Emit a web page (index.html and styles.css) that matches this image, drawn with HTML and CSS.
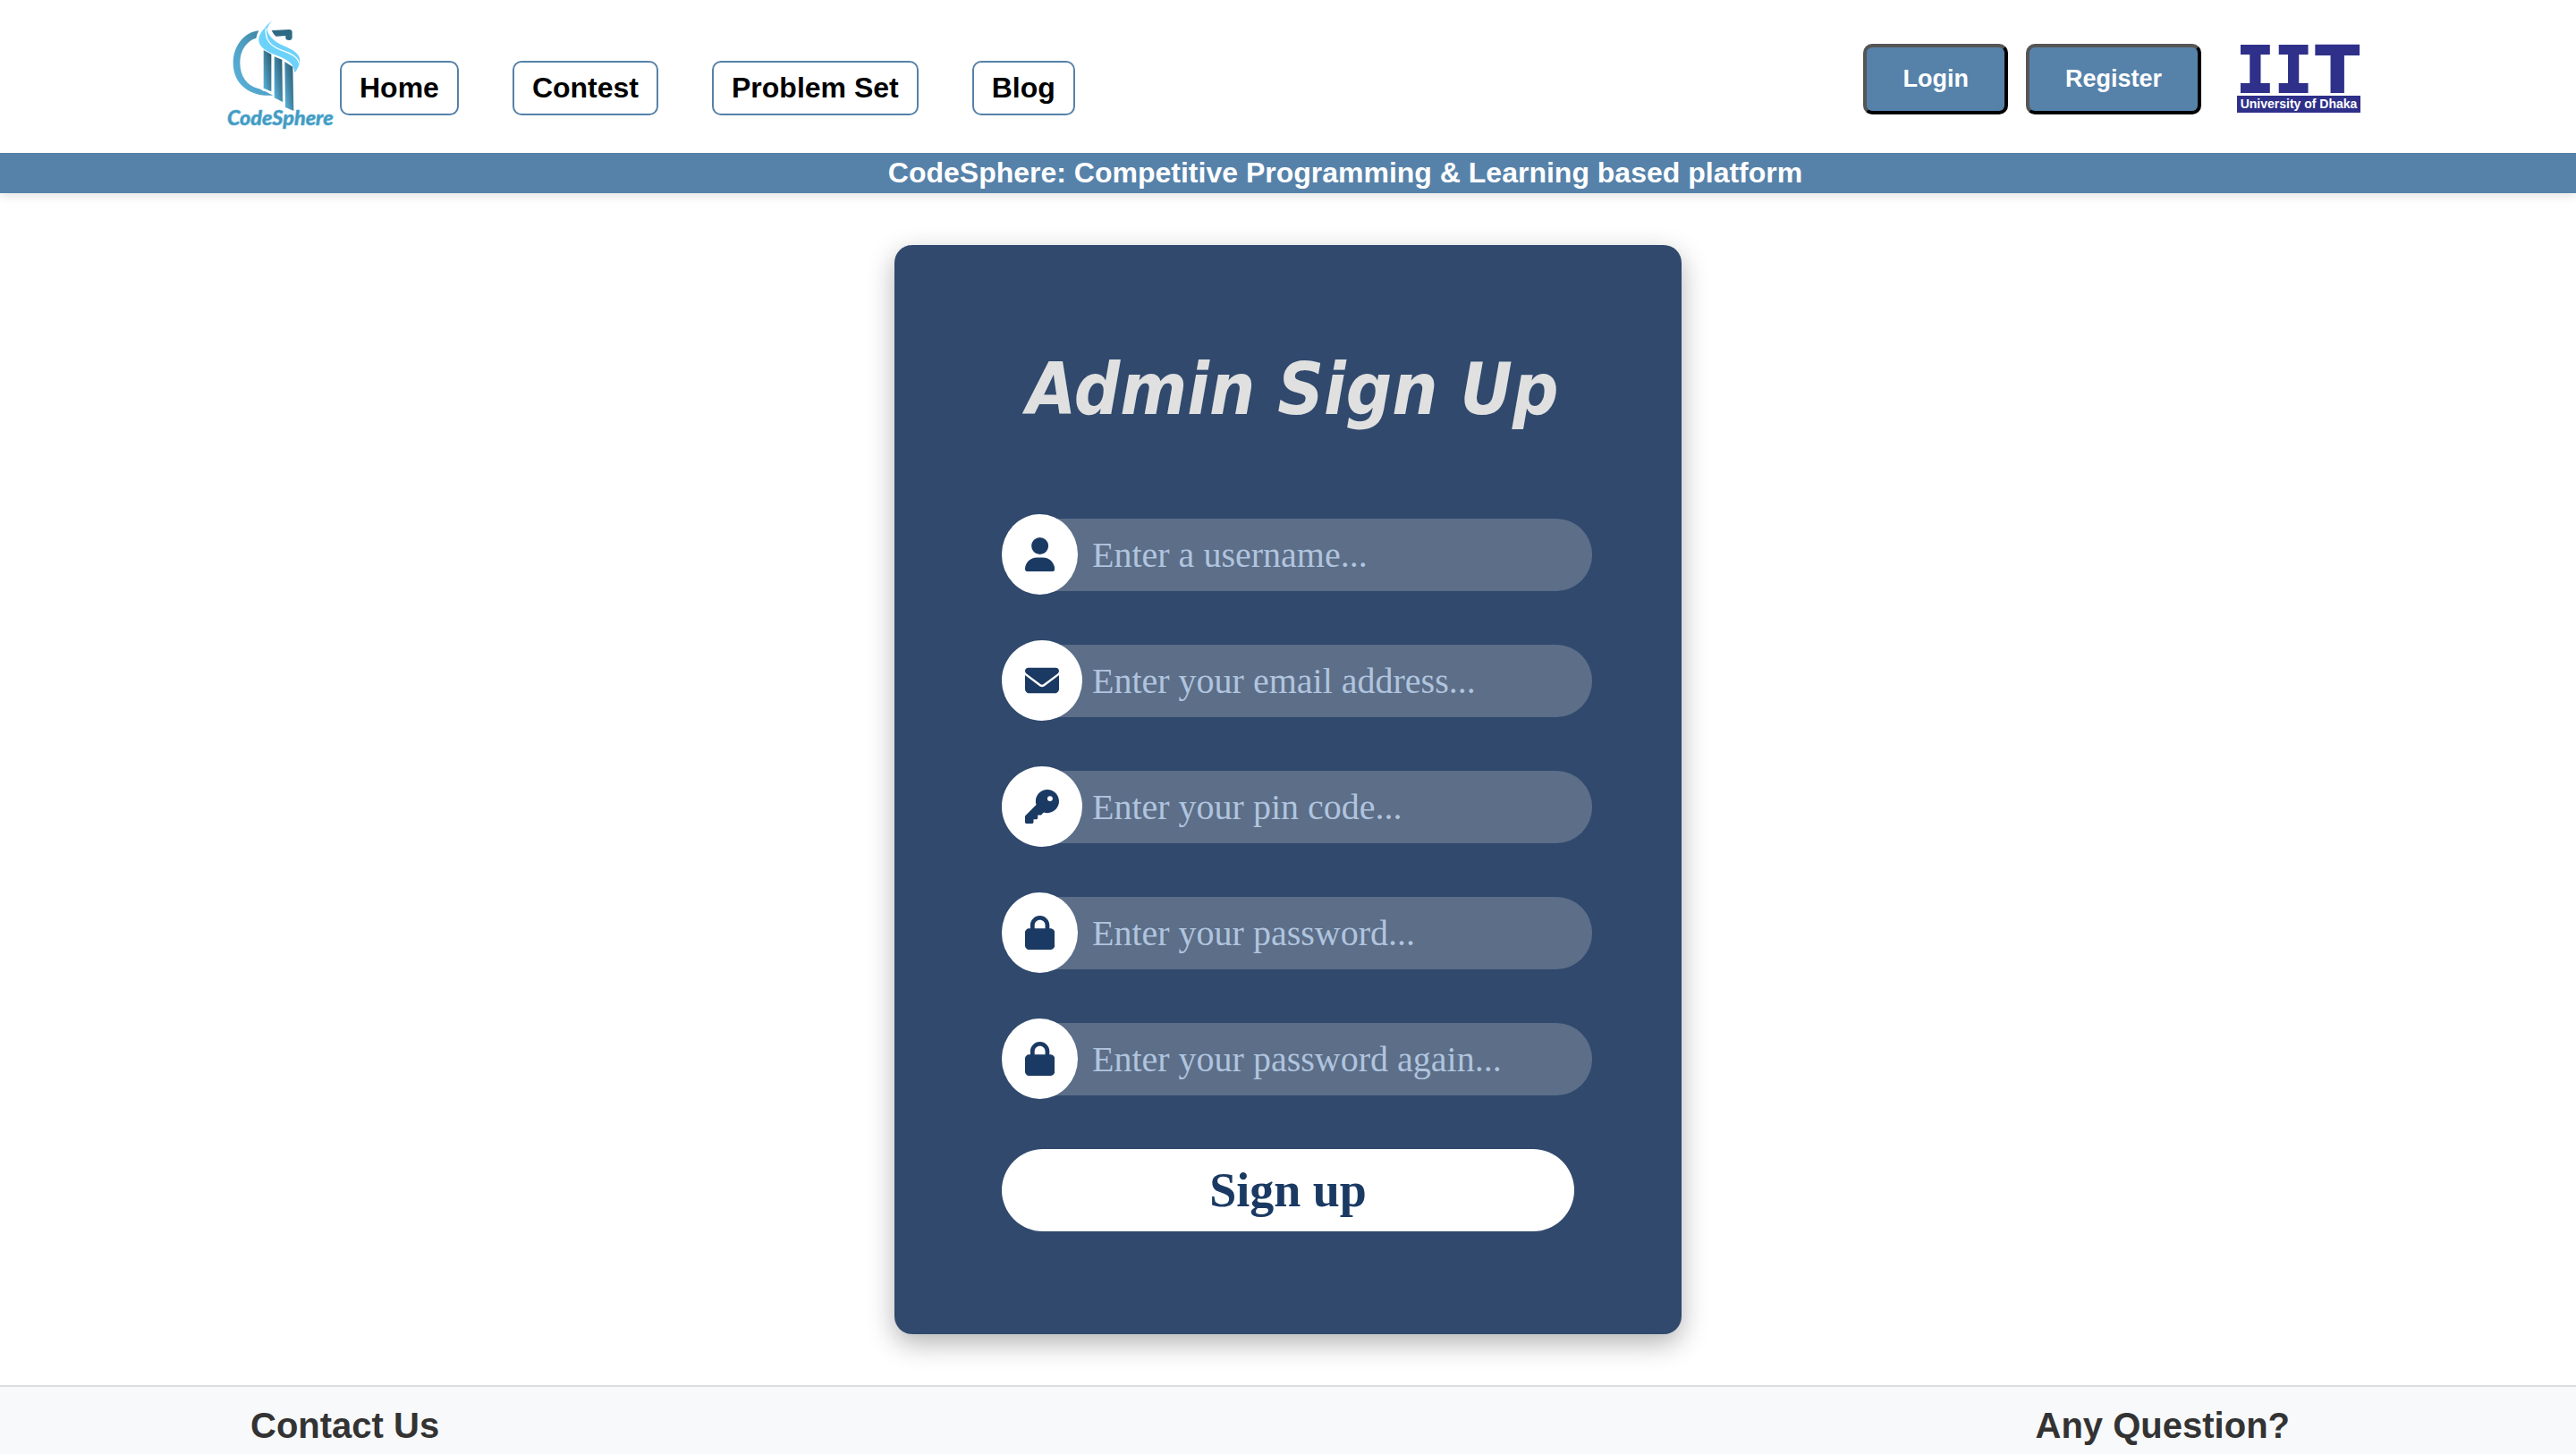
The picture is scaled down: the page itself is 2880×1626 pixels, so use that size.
FILE: index.html
```html
<!DOCTYPE html>
<html lang="en">
<head>
<meta charset="utf-8">
<meta name="viewport" content="width=device-width, initial-scale=1">
<title>CodeSphere - Admin Sign Up</title>
<link rel="stylesheet" href="styles.css">
</head>
<body>
<header class="site-header">
  <div class="header-main">
    <a class="brand" href="#" aria-label="CodeSphere home">
      <svg class="brand-logo" viewBox="104 66 360 381">
        <defs>
          <linearGradient id="ring" x1="1" y1="0" x2="0" y2="1">
            <stop offset="0" stop-color="#3a7893"/><stop offset=".5" stop-color="#4f9fc3"/><stop offset="1" stop-color="#5cb6e0"/>
          </linearGradient>
          <linearGradient id="pillar" x1="0" y1="1" x2="1" y2="0">
            <stop offset="0" stop-color="#5cb9e4"/><stop offset=".45" stop-color="#4489a8"/><stop offset="1" stop-color="#27566b"/>
          </linearGradient>
        </defs>
        <path fill="url(#ring)" d="M210 103C160 108 124 155 124 212C124 275 172 326 258 320L232 307C222 306 215 297 208 297C170 288 147 255 147 210C147 168 170 136 201 128Q204 114 210 103Z"/>
        <path fill="#2f6a84" d="M253 102L312 99Q322 99 322 108V126Q321 135 312 135Q302 135 300 130V120L268 122Q258 114 253 102Z"/>
        <path fill="url(#pillar)" d="M226 168L252 182V307L226 296Z"/>
        <path fill="url(#pillar)" d="M262 190L288 200L290 342L262 328Z"/>
        <path fill="url(#pillar)" d="M297 207L324 224L327 372L299 360Z"/>
        <path fill="#6dd2fa" d="M257 67C234 88 206 114 210 138C214 166 250 178 285 192C310 203 330 218 330 244C342 232 349 212 347 196C344 178 320 164 290 152C262 140 240 118 238 98C241 88 247 78 257 67Z"/>
        <path fill="none" stroke="#fff" stroke-width="4" d="M234 94C230 136 250 155 290 170C320 180 342 192 344 211"/>
        <text class="brand-name" x="104" y="421">CodeSphere</text>
      </svg>
    </a>
    <nav class="main-nav">
      <a class="nav-link" href="#">Home</a>
      <a class="nav-link" href="#">Contest</a>
      <a class="nav-link" href="#">Problem Set</a>
      <a class="nav-link" href="#">Blog</a>
    </nav>
    <div class="account">
      <button class="account-button" type="button">Login</button>
      <button class="account-button" type="button">Register</button>
      <svg class="iit-logo" viewBox="0 0 138 76">
        <text class="iit-mono" x="-1" y="52">II</text>
        <text class="iit-sans" x="88" y="52">T</text>
        <rect y="56" width="138" height="19" fill="#2e3089"/>
        <text class="iit-caption" x="69" y="70" text-anchor="middle">University of Dhaka</text>
      </svg>
    </div>
  </div>
  <div class="tagline">CodeSphere: Competitive Programming &amp; Learning based platform</div>
</header>

<main class="content">
  <form class="signup-card">
    <h1 class="signup-title">Admin Sign Up</h1>
    <div class="field">
      <label class="field-icon" for="username" aria-label="Username">
        <svg class="icon" viewBox="0 0 448 512"><path d="M224 256A128 128 0 1 0 224 0a128 128 0 1 0 0 256zm-45.700 48C79.800 304 0 383.800 0 482.300C0 498.700 13.300 512 29.700 512H418.300c16.400 0 29.700-13.300 29.700-29.700C448 383.800 368.200 304 269.700 304H178.300z"/></svg>
      </label>
      <input class="field-input" id="username" type="text" placeholder="Enter a username...">
    </div>
    <div class="field">
      <label class="field-icon" for="email" aria-label="Email address">
        <svg class="icon" viewBox="0 0 512 512"><path d="M48 64C21.500 64 0 85.500 0 112c0 15.100 7.100 29.300 19.200 38.400L236.800 313.600c11.400 8.500 27 8.500 38.400 0L492.800 150.400c12.100-9.100 19.200-23.300 19.200-38.400c0-26.500-21.500-48-48-48H48zM0 176V384c0 35.300 28.700 64 64 64H448c35.300 0 64-28.700 64-64V176L294.400 339.200c-22.800 17.100-54 17.100-76.800 0L0 176z"/></svg>
      </label>
      <input class="field-input" id="email" type="email" placeholder="Enter your email address...">
    </div>
    <div class="field">
      <label class="field-icon" for="pin" aria-label="Pin code">
        <svg class="icon" viewBox="0 0 512 512"><path d="M336 352c97.200 0 176-78.800 176-176S433.200 0 336 0S160 78.800 160 176c0 18.700 2.900 36.800 8.300 53.700L7 391c-4.500 4.500-7 10.600-7 17v80c0 13.300 10.700 24 24 24h80c13.300 0 24-10.700 24-24V448h40c13.300 0 24-10.700 24-24V384h40c6.400 0 12.500-2.500 17-7l33.300-33.300c16.900 5.400 35 8.300 53.700 8.300zM376 96a40 40 0 1 1 0 80 40 40 0 1 1 0-80z"/></svg>
      </label>
      <input class="field-input" id="pin" type="text" placeholder="Enter your pin code...">
    </div>
    <div class="field">
      <label class="field-icon" for="password" aria-label="Password">
        <svg class="icon" viewBox="0 0 448 512"><path d="M144 144v48H304V144c0-44.200-35.800-80-80-80s-80 35.800-80 80zM80 192V144C80 64.500 144.500 0 224 0s144 64.500 144 144v48h16c35.300 0 64 28.700 64 64V448c0 35.300-28.700 64-64 64H64c-35.300 0-64-28.700-64-64V256c0-35.300 28.700-64 64-64H80z"/></svg>
      </label>
      <input class="field-input" id="password" type="password" placeholder="Enter your password...">
    </div>
    <div class="field">
      <label class="field-icon" for="password-again" aria-label="Password again">
        <svg class="icon" viewBox="0 0 448 512"><path d="M144 144v48H304V144c0-44.200-35.800-80-80-80s-80 35.800-80 80zM80 192V144C80 64.500 144.500 0 224 0s144 64.500 144 144v48h16c35.300 0 64 28.700 64 64V448c0 35.300-28.700 64-64 64H64c-35.300 0-64-28.700-64-64V256c0-35.300 28.700-64 64-64H80z"/></svg>
      </label>
      <input class="field-input" id="password-again" type="password" placeholder="Enter your password again...">
    </div>
    <button class="signup-button" type="submit">Sign up</button>
  </form>
</main>

<footer class="site-footer">
  <h2 class="footer-title">Contact Us</h2>
  <h2 class="footer-title">Any Question?</h2>
</footer>
</body>
</html>
```

FILE: styles.css
```css
* {
  box-sizing: border-box;
}

body {
  display: flex;
  flex-direction: column;
  min-height: 100vh;
  margin: 0;
  background: #fff;
  font-family: Arial, "Liberation Sans", sans-serif;
}

/* Header */
.site-header {
  box-shadow: 0 4px 10px rgba(0, 0, 0, 0.1);
}

.header-main {
  display: flex;
  align-items: center;
  gap: 6px;
  padding: 22px 241px 22px 254px;
}

.brand,
.brand-logo {
  display: block;
}

.brand-logo {
  width: 120px;
  height: 127px;
  overflow: visible;
}

.brand-name {
  fill: #4598bd;
  stroke: #5cb4dc;
  stroke-width: 2px;
  font-family: Lato, sans-serif;
  font-size: 70px;
  font-style: italic;
  font-weight: 900;
}

.main-nav {
  display: flex;
  gap: 60px;
  padding-top: 26px;
}

.nav-link {
  padding: 10px 20px;
  border: 2px solid #5682aa;
  border-radius: 10px;
  color: #000;
  font-size: 32px;
  font-weight: bold;
  text-decoration: none;
}

.account {
  display: flex;
  align-items: center;
  gap: 20px;
  margin-left: auto;
  padding-top: 6px;
}

.account-button {
  padding: 20px 40px;
  border: 4px solid;
  border-color: #555 #000 #000 #555;
  border-radius: 10px;
  background: #5682aa;
  color: #fff;
  font-family: inherit;
  font-size: 27px;
  font-weight: bold;
}

.iit-logo {
  width: 138px;
  height: 76px;
  margin-left: 20px;
  overflow: visible;
}

.iit-mono,
.iit-sans {
  fill: #2e3089;
  stroke: #2e3089;
  stroke-width: 2px;
  font-size: 71px;
  font-weight: bold;
}

.iit-mono {
  font-family: "DejaVu Sans Mono", monospace;
}

.iit-sans {
  font-family: "DejaVu Sans", sans-serif;
}

.iit-caption {
  fill: #fff;
  font-size: 14px;
  font-weight: bold;
}

.tagline {
  padding: 4px 0 4px 128px;
  background: #5682aa;
  color: #fff;
  font-size: 32px;
  font-weight: bold;
  text-align: center;
}

/* Sign up form */
.content {
  display: flex;
  justify-content: center;
  padding: 58px 20px 57px;
}

.signup-card {
  display: flex;
  flex-direction: column;
  gap: 51px;
  width: 880px;
  padding: 112px 100px 115px 120px;
  border-radius: 20px;
  background: #30496d;
  box-shadow: 0 10px 30px rgba(0, 0, 0, 0.3);
}

.signup-title {
  margin: 0 10px 38px 0;
  color: #e0e0e0;
  font-family: "DejaVu Sans Condensed", "Noto Sans", sans-serif;
  font-size: 80px;
  font-style: italic;
  font-weight: bold;
  line-height: 100px;
  text-align: center;
  white-space: nowrap;
}

.field {
  position: relative;
  display: flex;
  align-items: center;
  height: 90px;
}

.field-icon {
  position: absolute;
  left: 0;
  display: flex;
  padding: 26px;
  border-radius: 50%;
  background: #fff;
}

.icon {
  height: 38px;
  fill: #1b3a63;
}

.field-input {
  width: 100%;
  height: 81px;
  padding: 0 40px 0 101px;
  border: 0;
  border-radius: 40px;
  background: #5c6e88;
  color: #fff;
  font-family: Georgia, "Liberation Serif", serif;
  font-size: 40px;
}

.field-input::placeholder {
  color: #b0c4de;
  opacity: 1;
}

.signup-button {
  height: 92px;
  margin: 5px 20px 0 0;
  border: 0;
  border-radius: 46px;
  background: #fff;
  color: #1b3a63;
  font-family: Georgia, "Liberation Serif", serif;
  font-size: 54px;
  font-weight: bold;
}

/* Footer */
.site-footer {
  display: flex;
  flex: 1;
  justify-content: space-between;
  padding: 20px 320px 9px 280px;
  border-top: 2px solid #ddd;
  background: #f8f9fb;
  color: #333;
}

.footer-title {
  margin: 0;
  font-size: 40px;
  line-height: 46px;
}
```
